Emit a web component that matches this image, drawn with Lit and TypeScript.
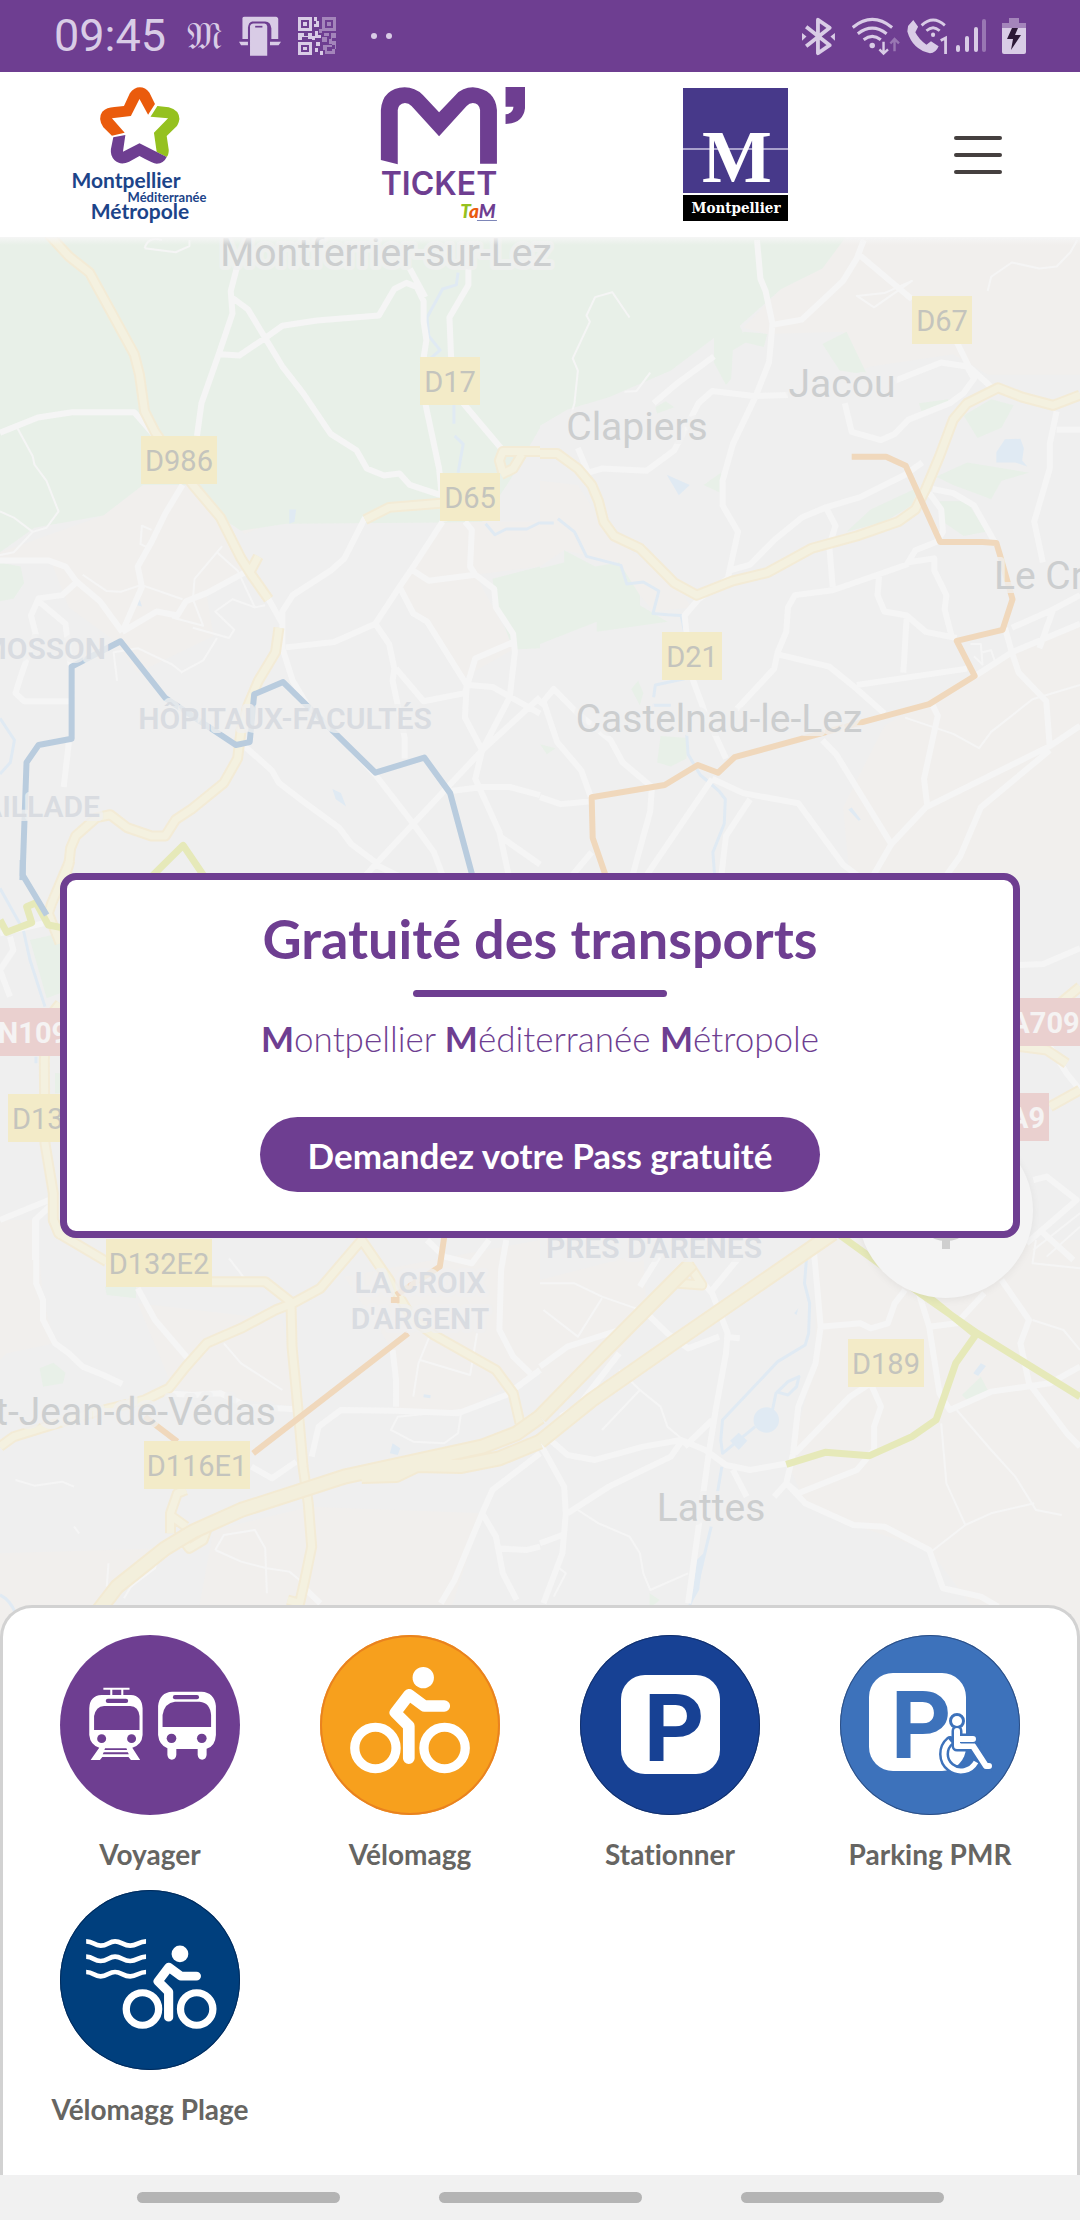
import { LitElement, html, svg, css } from "lit";
import { customElement } from "lit/decorators.js";

interface Tile {
  place: string;
  land: string;
  green: string;
  water: string;
  rivers: string;
  roads: string;
  lanes: string;
  main: string;
  motorway: string;
  blue: string;
  orange: string;
  lime: string;
}

// The map is cut in tiles; each one has its own drawing grid.
const TILES: Tile[] = [
  {
    place: "translate(0 240) scale(.3444 .4082)",
    land: "M0 765 300 675 415 600H540L640 680 720 800 600 870 620 970 400 1060 330 980 200 900 150 790 0 780zM1290 690H1568V800L1380 820 1470 960 1490 1003 1350 1070 1200 900 1160 850zM655 665 800 640V690L710 720z",
    green: "M0-10H1568V460L1480 590 1400 690 1290 692 830 695 700 712 640 680 540 600H415L300 675 100 705 0 765zM1430 830 1568 800V1000L1490 1003 1440 890zM0 790 60 800 70 840 40 878 0 885z",
    water: "M840 660 860 660 855 690 840 695zM965 1345 990 1355 1005 1388 975 1370zM405 878 412 898 398 895z",
    rivers: "M1330 80 1325 110 1285 120 1240 190 1245 235 1278 270 1250 290M1318 400V450M1320 480 1345 500 1330 570M1410 695 1437 722 1470 708 1530 708 1568 692M0 1172 42 1225 30 1280 0 1308",
    roads: "M0 472 110 435 210 422 390 422 450 480M690 60 670 125 675 180 635 280 585 400 572 480M672 140 720 170 770 240 820 310 880 375 960 475 1035 515 1065 560 1115 577 1160 572 1190 600 1280 625M640 280 695 283 770 240 820 210 920 197 1100 185 1145 120 1180 105 1210 115 1230 150 1230 200 1238 245 1228 300 1235 400 1275 560 1290 690M1190 70 1235 140M1360 70V110L1305 190 1310 290 1345 400 1460 515M530 600 480 670 440 740 400 800 412 850 355 960M355 960 455 910 515 920 540 885 600 865 710 815M0 785H140L190 800 220 835 290 885 355 960M220 840 180 870 112 878 90 920 105 970M112 885 190 940 205 1040M105 960 60 1070 45 1110 70 1130 200 1130M200 1230 185 1340M1060 680 1000 780 960 810 850 870 820 910 820 1000 850 1080 900 1150 1000 1230 1090 1310 1200 1430 1260 1500 1290 1568M780 880 820 940M830 998 970 985 1090 940 1160 850 1200 800 1285 690M1200 810 1245 835 1380 820 1435 855 1440 900 1490 965 1495 1010 1480 1120 1400 1250M1350 690 1370 710 1365 800 1380 820M1090 940 1130 990 1145 1050 1140 1080 1175 1220 1175 1270M1150 1050 1230 1130 1350 1110 1380 1025 1490 985M1160 850 1200 915 1240 935 1355 1090 1350 1170 1400 1250 1380 1320 1450 1450 1480 1568M1360 1090 1430 1095 1568 1160M1568 1120 1400 1250 1200 1430 1090 1530 1050 1568M1310 1350 1400 1340 1480 1340 1568 1360M1090 1530 1180 1568M710 1240 790 1300 810 1330 880 1375 985 1440 1020 1480 1100 1530M1450 1460 1568 1530",
    lanes: "M420 20Q430-10 470 0M420 20 510 30 550 15V0M50 460 95 530 100 550 135 590 170 665 135 705 95 715 40 765 0 772M0 665 40 680 95 715M645 750 565 830 560 880 590 945 500 925M630 765 690 810 740 900 770 895M240 820 310 860 350 862 410 845 530 880M340 1080 330 1010 400 1000 500 1040 530 1060M740 900 675 880 625 910 680 955 665 975 560 950M630 975 590 1030 525 1060M440 710 412 700 408 745 425 752",
    main: "M140-15 200 40 260 80 390 280 405 330 420 420 450 470 560 600 640 680 700 780 730 820 780 880M750 775 725 815M810 950 800 1010 750 1080 720 1140 700 1200 690 1270 650 1330 555 1395 510 1420 480 1460 440 1460 370 1440 320 1408 280 1415 220 1460 205 1490 200 1530 185 1568M1060 685 1130 655 1280 645M1460 570 1450 540 1460 518H1568M1455 575 1490 560 1515 525",
    motorway: "",
    blue: "M1375 1568 1307 1355 1232 1268 1090 1305 822 1083 738 1113 725 1230 685 1237 480 1122 350 983 208 1045V1222L112 1237 77 1280 65 1568",
    orange: "",
    lime: "M430 1568 532 1483 600 1568",
  },
  {
    place: "translate(540 240) scale(.3444 .4082)",
    land: "M880 0H1568V330H1300L1200 280 960 310 930 320 880 225 660 230 590 215 700 120 820 70zM0 590 110 600 200 720 400 850 440 900 330 910 290 870 230 790 70 760 0 800zM1568 940V1568H900L880 1390 1000 1190 1260 1060z",
    green: "M0-10H890L820 70 700 120 580 210 600 250 560 270 555 340 540 355 505 300V240L380 320 200 385 80 415 0 455zM590 225 660 230 650 262 590 250zM820 255 890 225 950 330 870 320zM0 805 70 790V760L160 800 230 790 290 870 290 895 370 935 165 960V935L0 990zM1230 430 1310 390 1375 405 1340 460 1270 485zM1150 580 1240 545 1420 570 1340 590 1310 635 1200 600zM890 715 960 660 1100 605 1080 650 1000 690zM1160 640 1240 640 1295 715 1230 725 1170 690zM475 600 525 570V620zM265 1100 285 1080 300 1110 290 1140zM350 1215 430 1220 425 1270 380 1290 340 1280zM0 1235 45 1245 20 1260zM1100 400 1185 390V405L1110 425zM335 410 365 395 390 410 340 425z",
    water: "M1325 520 1350 488 1395 487 1405 510 1400 540 1415 555 1380 545 1325 545zM368 575 435 600 403 625zM895 1395 905 1390 932 1420 925 1423z",
    rivers: "M0 693H40M52 683 100 715 135 775 235 797 252 843 300 838 345 860 328 915 370 918 410 920 420 960M330 1120 335 1090 420 1075M325 1140H380M425 1200 430 1260 465 1310 520 1350 538 1370 535 1430 502 1500 508 1568",
    roads: "M630 0 640 95 655 125 675 205 665 300 625 385 560 500 530 590 530 650 575 715 545 830 460 880 420 920 430 1000 445 1080 480 1160 540 1270M940 0 920 45 880 100 830 140 760 195 675 208M925 35 1080 145M1210 250 1245 310 1310 360M1030 345 1165 300 1240 310 1260 340 1230 375 1190 400 1070 440 1030 475 990 490 905 470 885 400M505 285 400 350 330 400M720 380 620 382 500 370 460 400 390 515 310 565 180 560 140 570 110 510M550 810 610 795 680 735 760 680 830 655 930 630 1060 575 1110 545M830 655 858 700 840 750 850 850M1500 420 1480 500 1480 560 1435 690 1460 790M1500 465H1568M1140 610 1200 620 1260 650 1320 740M1130 620 1165 660 1170 715 1150 740 1090 760 1065 795 980 820 850 858 740 870 720 900 715 960 690 1010 680 1050 570 1150M1065 790 1145 780 1145 810 1180 870 1175 905 1195 970M985 820 980 870 1000 910 1065 920 1120 960 1210 975M1065 920 1055 1060M690 1015 840 1045 920 1100 1000 1160M920 1090 1240 1050M1370 950 1490 905 1568 870M1490 905 1450 1000M1260 1070 1370 1010 1568 940M1350 950 1370 1010 1390 1060 1470 1130 1480 1240M1568 1190 1480 1240 1120 1390 1020 1480 960 1568M1480 1250 1280 1390 1220 1510 1170 1568M1140 1140 1155 1165 1115 1320 1125 1390M820 1225 860 1260 1020 1480M0 1140 40 1100 110 1160 205 1225 240 1280 325 1340 320 1400 265 1568M10 1130 50 1230 120 1300 150 1370M0 1365 60 1382 150 1375M500 1320 590 1355 750 1380 880 1530 940 1568M500 1320 300 1568M610 1370 540 1460 525 1568M150 1500 90 1560",
    lanes: "M260 190 210 128 160 140 135 185 145 200 95 290 110 320 100 400 90 430M245 372 280 370 320 325M1300 125 1310 90 1370 55 1450 70 1500 65 1540 30 1560 0M920 137 970 165 1080 100 1000 130zM1060 1170 1200 1210 1275 1245 1310 1205 1430 1125 1568 1090M1250 990H1280L1285 1040 1260 1020M1285 1010 1310 1005 1320 1030",
    main: "M0 523H50L110 560 150 600 170 640 185 690 215 725 290 755 390 840 455 870 560 835 660 815 790 755 920 725 1040 690 1090 660 1120 610 1160 530 1200 440 1240 400 1330 362 1400 385 1490 405 1568 380",
    motorway: "",
    blue: "",
    orange: "M905 531H1005L1062 553 1162 740H1285L1325 742 1335 770 1372 880 1343 955 1210 982 1262 1068 1130 1137 920 1185 565 1267 517 1305 458 1286 362 1335 150 1365 153 1465 195 1568",
    lime: "",
  },
  {
    place: "translate(0 860) scale(.3333)",
    land: "",
    green: "M90 240 180 220V400L140 415zM165 640H180V700H165z",
    water: "",
    rivers: "M0 85 70 210 90 300 135 440M108 590V610",
    roads: "M0 220 130 190M30 230 40 270 0 330 30 410M0 1080 160 1015M105 1200V1080L160 1030",
    lanes: "",
    main: "M210 0 155 130 145 160 180 250M180 430 140 480 133 600 135 850 160 1000 160 1080 185 1130",
    motorway: "",
    blue: "M68 0V45L140 165",
    orange: "",
    lime: "M0 180 20 217 95 188 80 140 108 128 145 195 185 203",
  },
  {
    place: "translate(960 860) scale(.3333)",
    land: "",
    green: "",
    water: "",
    rivers: "",
    roads: "M180 315 250 312 360 265M270 560 320 640 360 690M220 960 260 950 350 1020 200 1150M240 1110 340 1200",
    lanes: "M220 1170 360 1060M260 1190 360 1100",
    main: "M300 430 360 380M180 560 260 570 320 610M270 740 360 690",
    motorway: "",
    blue: "",
    orange: "",
    lime: "",
  },
  {
    place: "translate(0 1220) scale(.3444 .3333)",
    land: "M0 0H105L125 240 160 370 20 400 0 420zM400 250 820 300 860 560 560 520 500 500zM1000 170 1568 60V450L1330 580H1150L1140 390zM0 1000 480 985 340 1100 290 1260H0zM620 930 900 860 1400 880 1280 1260H560z",
    green: "M305 200H395V235L310 225zM115 445 155 428 190 458 183 490 125 500z",
    water: "M1140 670 1162 685 1155 705 1132 700z",
    rivers: "M0 1125Q30 1140 45 1180M1230 527 1250 530",
    roads: "M105 0V190L125 240V300L160 370 200 400 240 440 300 465 355 492M400 205 450 300 545 415M480 520 560 525 640 520 720 560 860 568M905 710 925 620 990 570 1150 572 1330 580 1470 525 1568 450M1140 390 1150 480V560M1568 700 1430 810 1400 880 1320 1080 1280 1150M1400 880 1440 950 1460 1060 1500 1140M1440 985 1530 990 1568 980M730 740 790 775 860 725M1240 60 1290 110 1370 130 1420 60M1470 60 1455 150 1450 330 1490 410 1540 460M885 1105 930 1150",
    lanes: "M665 115 710 175M650 370 700 430 820 510M45 780 100 797 180 785 215 800M625 990 650 945 740 930 770 985 775 1120M625 990 700 1025 775 1045 840 1055 870 1080M1220 420 1365 465 1385 340M1255 330 1215 430 1200 530M1135 630 1155 590 1340 570 1330 640 1290 670 1200 665zM315 1030 310 1100M360 1135 380 1100 450 1045 460 1010 540 975M215 920 230 940",
    main: "M155 0 170 40 310 125M615 185H770L850 250M0 680 40 650 150 615 300 570 420 540 490 505 540 440 600 370 700 325 800 270 850 250 930 205 1050 60 1130 180 1200 300 1260 345 1440 450 1490 520 1510 610M845 255 848 380 870 620 880 740 895 850 905 980 885 1080 870 1150 835 1140M540 810 515 820 495 880V940M500 890 540 920M600 930 590 960 550 985 535 965",
    motorway: "M280 1180 340 1100 480 985 560 935 700 870 1000 770 1200 725 1400 680 1500 640 1568 590M1050 768 1150 765 1210 735 1340 738 1450 715 1568 665",
    blue: "",
    orange: "M1290 50 1277 140 1150 225M1135 240H1160M1185 340 735 700M515 665 420 590",
    lime: "",
  },
  {
    place: "translate(540 1220) scale(.3444 .3333)",
    land: "M800 60H1568V1260H1330L1130 990 910 915 770 850 720 730 800 430zM0 180 300 100 310 280 230 400 0 600zM1280 270 1300 250 1400 300 1380 360 1300 330z",
    green: "M1225 525 1280 470 1300 510 1240 540zM318 1120 348 1140 330 1155 318 1155z",
    water: "M620 600A37 38 0 0 0 694 600 37 38 0 0 0 620 600zM577 638 602 662 577 690 552 662zM455 1020 475 1000 462 1110 440 1150zM1258 460 1280 430 1295 438 1272 468zM738 280 750 265 745 285z",
    rivers: "M775 100 768 190 783 250 780 340 770 375 690 425 530 600 525 660 530 700 625 620M675 570 685 520 720 485 752 470 745 500 720 525 685 515M528 740 515 820M497 920 460 1080 435 1155",
    roads: "M795 90 815 320 800 430 750 560 735 700 715 790M440 150 500 220 545 340 540 400 510 570 490 700 470 850 430 1150M30 660 80 705 160 720 300 680 410 660 480 690 540 735 610 750 720 730M0 670 70 800 75 880 65 1000 10 1150M80 880 200 800 380 710 410 665M0 970 65 945M740 700 900 530 960 490 990 560 970 620V690L920 750 750 820 715 790 680 830M715 790 770 850 910 915 1000 920 1130 990 1170 1105 1280 1130 1330 1160M560 750 600 830M500 600 420 680M1100 220 1130 320 1160 520 1190 570 1310 515 1480 490 1568 440M1130 320 1210 310 1290 220M1340 180 1420 300 1395 370 1420 490 1530 640 1568 680M815 320 930 310 960 325 1010 310 1030 250 1060 210M310 280 370 340 430 385 520 350M0 440 80 380 230 330M60 590 110 560 230 400M290 200 350 100M500 210 580 110M535 350 580 355",
    lanes: "M0 190H100L180 230 320 280M180 235 110 350 10 270M230 450 290 510 350 560 370 620 410 655M290 510 180 630M110 870 170 910 260 950 290 1000 300 1060 320 1110 430 1060M1165 610 1180 790 1235 915 1130 1000M1235 915 1310 880 1435 850M1210 570 1310 690 1380 770 1440 870 1515 885M1440 60 1430 130 1568 145M1430 300 1520 330 1568 390M50 1040 75 1060 40 1130",
    main: "M400 190 470 195 430 130",
    motorway: "M0 590 180 400 440 130M0 665 150 540 400 360 850 40",
    blue: "",
    orange: "",
    lime: "M870 45 960 112 1110 225 1270 340 1568 530M1130 232 1265 345 1207 430 1150 600 1080 650 957 707 828 697 715 733",
  },
];

// kind: t = town, q = district
const PLACES: [string, string, number, number, string][] = [
  ["t", "Montferrier-sur-Lez", 386, 266, "middle"],
  ["t", "Clapiers", 637, 440, "middle"],
  ["t", "Jacou", 842, 397, "middle"],
  ["t", "Castelnau-le-Lez", 719, 732, "middle"],
  ["t", "Le Crès", 994, 589, "start"],
  ["t", "St-Jean-de-Védas", 276, 1425, "end"],
  ["t", "Lattes", 711, 1521, "middle"],
  ["q", "MOSSON", 106, 659, "end"],
  ["q", "HÔPITAUX-FACULTÉS", 285, 729, "middle"],
  ["q", "PAILLADE", 100, 817, "end"],
  ["q", "LA CROIX", 420, 1293, "middle"],
  ["q", "D'ARGENT", 420, 1329, "middle"],
  ["q", "PRÉS D'ARÈNES", 654, 1258, "middle"],
];

const SHIELDS: [string, number, number, number, string][] = [
  ["D67", 912, 296, 60, "d"],
  ["D17", 420, 357, 60, "d"],
  ["D986", 141, 436, 76, "d"],
  ["D65", 440, 473, 60, "d"],
  ["D21", 662, 632, 60, "d"],
  ["N109", -6, 1008, 78, "n"],
  ["D132", 8, 1094, 76, "d"],
  ["A709", 1007, 998, 76, "n"],
  ["A9", 1005, 1093, 44, "n"],
  ["D132E2", 106, 1239, 106, "d"],
  ["D116E1", 144, 1441, 106, "d"],
  ["D189", 848, 1339, 76, "d"],
];

const layer = (cls: string, key: keyof Tile) =>
  TILES.filter((t) => t[key]).map((t) => svg`<path class=${cls} transform=${t.place} d=${t[key]} />`);

@customElement("city-map")
export class CityMap extends LitElement {
  static styles = css`
    :host { display: block; overflow: hidden; background: #efefef; }
    svg { display: block; width: 100%; height: 100%; }
    path { vector-effect: non-scaling-stroke; }
    .land { fill: #f1efed; }
    .green { fill: #e8f0e8; }
    .water { fill: #e0eaf3; }
    .river, .road, .lane, .edge, .fill, .wide-edge, .wide, .tram { fill: none; stroke-linejoin: round; }
    .river { stroke: #e0eaf3; stroke-width: 3; }
    .road { stroke: #f5f5f5; stroke-width: 6; }
    .lane { stroke: #f5f5f5; stroke-width: 2; }
    .edge { stroke: #f3ebd6; stroke-width: 11; }
    .fill { stroke: #f4f1e0; stroke-width: 7; }
    .wide-edge { stroke: #f3ead3; stroke-width: 16; }
    .wide { stroke: #f3efdc; stroke-width: 12; }
    .tram { stroke-width: 6; }
    .blue { stroke: #b9ccde; }
    .orange { stroke: #f0d8bc; }
    .lime { stroke: #e6e9b9; stroke-width: 7; }
    text { font-family: Roboto, sans-serif; }
    .t, .q { paint-order: stroke; stroke: rgba(240, 240, 240, 0.75); stroke-width: 8; stroke-linejoin: round; }
    .t { font-size: 39px; fill: #cccecf; }
    .q { font-size: 30px; font-weight: 600; fill: #d9dce1; }
    .shield-d { fill: #f3ebc8; }
    .shield-n { fill: #ead0cf; }
    .num-d, .num-n { font-size: 29px; text-anchor: middle; }
    .num-d { fill: #c4c4bd; }
    .num-n { fill: #f5f3f3; font-weight: 700; }
  `;

  render() {
    return html`
      <svg viewBox="0 237 1080 1403" preserveAspectRatio="xMidYMin slice" role="img" aria-label="Montpellier">
        ${layer("land", "land")} ${layer("green", "green")} ${layer("water", "water")}
        ${layer("river", "rivers")} ${layer("lane", "lanes")} ${layer("road", "roads")}
        ${layer("edge", "main")} ${layer("fill", "main")}
        ${layer("wide-edge", "motorway")} ${layer("wide", "motorway")}
        ${layer("tram lime", "lime")} ${layer("tram orange", "orange")} ${layer("tram blue", "blue")}
        ${PLACES.map(([kind, name, x, y, anchor]) =>
          svg`<text class=${kind} x=${x} y=${y} text-anchor=${anchor}>${name}</text>`)}
        ${SHIELDS.map(([name, x, y, w, kind]) => svg`
          <rect class="shield-${kind}" x=${x} y=${y} width=${w} height="48" />
          <text class="num-${kind}" x=${x + w / 2} y=${y + 35}>${name}</text>`)}
      </svg>`;
  }
}

const cyclist = svg`
  <ellipse cx="1229" cy="233" rx="31" ry="32" fill="#fff" />
  <g fill="none" stroke="#fff">
    <ellipse cx="1090" cy="444" rx="60" ry="62" stroke-width="27" />
    <ellipse cx="1291" cy="444" rx="60" ry="62" stroke-width="27" />
    <path d="M1290 318H1232L1188 284 1148 338 1187 378V475" stroke-width="34" stroke-linecap="round" stroke-linejoin="round" />
  </g>`;

const SERVICES = [
  {
    label: "Voyager", tone: "violet",
    art: svg`<svg viewBox="174 105 523 540" preserveAspectRatio="none">
      <g fill="#fff">
        <path d="M300 263H376V269H358V286H352V269H326V286H320V269H300z" />
        <path d="M259 325Q260 287 295 285H380Q412 287 414 325V405Q412 435 384 443L407 480H380L373 471H297L290 480H263L288 443Q262 435 259 405z" />
        <path d="M459 318Q463 277 500 275H585Q623 277 627 318V405Q625 440 600 446V465Q598 479 587 479T574 465V447H512V465Q510 479 499 479T486 465V445Q462 435 459 405z" />
      </g>
      <g fill="#6e3e91">
        <rect x="307" y="296" width="65" height="13" rx="6" />
        <path d="M273 390V348Q278 320 302 318H378Q402 320 405 348V390z" />
        <circle cx="295" cy="416" r="13" /><circle cx="382" cy="416" r="13" />
        <path d="M305 445H367L369 450H303zM301 457H371L374 463H298z" />
        <rect x="502" y="285" width="76" height="13" rx="6" />
        <path d="M472 381V345Q478 308 508 305H580Q610 308 613 345V381z" />
        <circle cx="498" cy="415" r="14" /><circle cx="586" cy="415" r="14" />
      </g></svg>`,
  },
  {
    label: "Vélomagg", tone: "amber",
    art: svg`<svg viewBox="929 105 523 540" preserveAspectRatio="none">${cyclist}</svg>`,
  },
  {
    label: "Stationner", tone: "navy",
    art: svg`<svg viewBox="0 0 180 180">
      <rect x="41" y="40" width="99" height="99" rx="24" fill="#fff" />
      <text class="park" x="94" y="126" fill="#174194">P</text></svg>`,
  },
  {
    label: "Parking PMR", tone: "sky",
    art: svg`<svg viewBox="0 0 180 180">
      <rect x="29" y="38" width="97" height="98" rx="24" fill="#fff" />
      <text class="park" x="81" y="123" fill="#3d72bb">P</text>
      <g fill="none" stroke-linecap="round" stroke-linejoin="round">
        <g stroke="#3d72bb">
          <circle cx="117" cy="86" r="6" fill="#3d72bb" stroke-width="4" />
          <path d="M110 106A17 17 0 1 0 136 127" stroke-width="10" />
          <path d="M117 96V111H133L147 131H149M119 104H134" stroke-width="11" />
        </g>
        <circle cx="117" cy="86" r="5" fill="#fff" />
        <g stroke="#fff">
          <path d="M110 106A17 17 0 1 0 136 127" stroke-width="5" stroke-linecap="butt" />
          <path d="M117 96V111H133L146 131H149M117 104H133" stroke-width="6" />
        </g>
        <path d="M121 108H134" stroke="#3d72bb" stroke-width="1" />
      </g></svg>`,
  },
  {
    label: "Vélomagg Plage", tone: "deep",
    art: svg`<svg viewBox="174 60 523 540" preserveAspectRatio="none">
      <g fill="none" stroke="#fff" stroke-width="14">
        <path d="M250 214C272 214 272 227 292 227S316 214 334 214 358 227 378 227 402 214 424 214" />
        <path d="M250 260C272 260 272 273 292 273S316 260 334 260 358 273 378 273 402 260 424 260" />
        <path d="M250 306C272 306 272 319 292 319S316 306 334 306 358 319 378 319 402 306 424 306" />
      </g>
      <g transform="translate(-441 69) scale(.784)">${cyclist}</g></svg>`,
  },
];

@customElement("app-root")
export class AppRoot extends LitElement {
  static styles = css`
    :host {
      display: flex; flex-direction: column; min-height: 100vh; background: #fff;
      font-family: Lato, "Open Sans", sans-serif; color: #666562;
    }
    svg { display: block; }
    button { font: inherit; color: inherit; border: 0; padding: 0; background: none; cursor: pointer; }
    .status {
      display: flex; justify-content: space-between; align-items: center; height: 72px; padding: 0 54px;
      background: #6e3e91; color: #d9cce6; box-sizing: border-box;
    }
    .status-side { display: flex; align-items: center; }
    .status-side.left { gap: 17px; }
    .status-side.right { gap: 7px; }
    .clock { font: 400 45px/56px Roboto, sans-serif; }
    .fraktur { font: 400 38px/56px "DejaVu Sans", "DejaVu Serif", serif; margin-left: 4px; }
    .dots { display: flex; gap: 9px; margin-left: 18px; }
    .dot { width: 6px; height: 6px; border-radius: 50%; background: currentColor; }
    .header {
      display: grid; grid-template-columns: 139fr 174fr 109fr 118fr; justify-items: center; align-items: center;
      height: 165px; background: #fff;
    }
    .brand { color: #1c4489; font-weight: 700; }
    .menu { display: flex; flex-direction: column; gap: 13px; margin-left: 32px; }
    .bar { width: 48px; height: 4px; border-radius: 2px; background: #45403f; }
    .main { flex: 1; display: flex; flex-direction: column; }
    .area { position: relative; flex: 1; display: flex; align-items: flex-end; padding: 0 60px 402px; }
    .area::after {
      content: ""; position: absolute; inset: 0 0 auto; height: 8px;
      background: linear-gradient(rgba(246, 246, 246, 0.9), rgba(255, 255, 255, 0));
    }
    .map { position: absolute; inset: 0; }
    .locate {
      position: absolute; right: 47px; bottom: 342px; width: 175px; height: 175px; border-radius: 50%;
      background: #f4f4f4; box-shadow: 0 2px 9px rgba(0, 0, 0, 0.06); display: grid; place-items: center;
    }
    .card {
      position: relative; flex: 1; display: flex; flex-direction: column; align-items: center;
      padding: 27px 20px 39px; border: 7px solid #6e3e91; border-radius: 16px; background: #fff; color: #6e3e91;
    }
    .title { margin: 0; font-size: 54px; line-height: 64px; font-weight: 700; }
    .rule { width: 254px; height: 7px; border-radius: 4px; background: #6e3e91; margin: 19px 0; }
    .subtitle { margin: 0 0 57px; font-size: 35px; line-height: 44px; font-weight: 300; }
    .initial { font-weight: 700; }
    .pass {
      height: 75px; padding: 0 48px; border-radius: 38px; background: #6e3e91; color: #fff;
      font-size: 35px; font-weight: 700;
    }
    .sheet {
      position: relative; margin-top: -35px; padding: 27px 17px 46px; border: 3px solid #d2d2d2; border-bottom: 0;
      border-radius: 32px 32px 0 0; background: #fff;
    }
    .services { display: grid; grid-template-columns: repeat(4, 1fr); row-gap: 16px; margin: 0; padding: 0; list-style: none; }
    .service { display: flex; flex-direction: column; align-items: center; gap: 19px; width: 100%; }
    .disc { width: 180px; height: 180px; border-radius: 50%; overflow: hidden; }
    .disc svg { width: 180px; height: 180px; }
    .violet { background: #6e3e91; }
    .amber { background: #f7a01d; box-shadow: inset 0 0 0 2px #e9821f; }
    .navy { background: #174194; box-shadow: inset 0 0 0 1px #12306c; }
    .sky { background: #3d72bb; box-shadow: inset 0 0 0 1px #2c4f85; }
    .deep { background: #003f7d; box-shadow: inset 0 0 0 1px #002b5c; }
    .park { font: 700 94px Roboto, sans-serif; text-anchor: middle; }
    .label { font-size: 28px; line-height: 40px; font-weight: 700; font-variant-ligatures: none; white-space: nowrap; }
    .keys { display: flex; justify-content: center; align-items: center; gap: 99px; height: 45px; background: #f1f1f1; }
    .key { width: 203px; height: 11px; border-radius: 6px; background: #b4b4b4; }
  `;

  private statusBar() {
    return html`
      <div class="status">
        <div class="status-side left">
          <span class="clock">09:45</span>
          <span class="fraktur">𝔐</span>
          <svg width="42" height="40" viewBox="700 54 122 118" preserveAspectRatio="none" fill="currentColor">
            <path d="M710 60Q711 56 716 56H808Q813 57 814 62V122H794V90Q792 71 776 70H738Q728 72 726 88V122H710z" />
            <path d="M732 84Q734 76 742 76H774Q781 77 782 84V171H732zM700 130H726V140H706zM790 130H822L815 140H790z" />
            <rect x="747" y="83" width="21" height="5" fill="#6e3e91" />
          </svg>
          <svg width="38" height="38" viewBox="0 0 38 38" fill="currentColor">
            <path fill-rule="evenodd" d="M0 0H14V14H0zM3 3V11H11V3zM5 5H9V9H5zM0 25H14V38H0zM3 28V35H11V28zM5 30H9V33H5zM16 0H19V4H16zM18 4H21V10H16V7H18zM0 16H6V19H10V16H14V22H10V20H4V23H0zM17 14H20V18H23V21H17zM14 19H17V23H14zM18 25H22V29H18zM17 31H20V35H17zM22 34H25V38H22z" />
            <path fill-rule="evenodd" opacity=".5" d="M24 0H38V14H24zM27 3V11H35V3zM29 5H33V9H29zM21 12H24V16H21zM26 16H31V19H26zM33 16H38V21H34V24H38V32H34V27H31V22H33zM24 20H29V25H24zM25 28H37V37H27V33H25zM29 30V34H34V30z" />
          </svg>
          <span class="dots"><span class="dot"></span><span class="dot"></span></span>
        </div>
        <div class="status-side right">
          <svg width="43" height="39" viewBox="762 52 124 112" preserveAspectRatio="none" fill="none" stroke="currentColor" stroke-width="11">
            <path d="M774 80 842 133 808 156V60L842 83 774 136" stroke-linejoin="round" />
            <path d="M762 98 775 108 762 120zM857 98 844 108 857 120z" fill="currentColor" stroke="none" />
          </svg>
          <svg width="48" height="39" viewBox="903 52 140 112" preserveAspectRatio="none" fill="none" stroke="currentColor" stroke-width="9">
            <path d="M905 82Q962 36 1020 82M920 100Q962 68 1004 100M937 117Q962 98 987 117" />
            <circle cx="962" cy="134" r="8" fill="currentColor" stroke="none" />
            <path d="M995 123V155M983 145 995 157 1008 145" stroke-width="7" />
            <path d="M1027 150V118M1015 128 1027 115 1040 128" stroke-width="7" opacity=".4" />
          </svg>
          <svg width="41" height="38" viewBox="1059 55 118 105" preserveAspectRatio="none">
            <path fill="currentColor" d="M1062 80 1077 63 1091 82 1083 97Q1092 115 1115 132L1128 122 1150 136Q1142 155 1125 155 1075 145 1060 95z" />
            <path d="M1101 78Q1134 48 1168 78M1115 93Q1134 76 1153 93" fill="none" stroke="currentColor" stroke-width="8" />
            <circle cx="1134" cy="104" r="6" fill="currentColor" />
            <path d="M1156 120 1170 113V157" fill="none" stroke="currentColor" stroke-width="8" />
          </svg>
          <svg width="40" height="36" viewBox="0 0 40 36" stroke="currentColor" stroke-width="4" stroke-linecap="round">
            <path d="M3 29V32M12 20V32M21 11V32" /><path d="M29 3V32" opacity=".4" />
          </svg>
          <svg width="24" height="36" viewBox="0 0 24 36" fill="currentColor">
            <path opacity=".5" d="M7 0H17V5H24V10H0V5H7z" /><path d="M0 10H24V34Q24 36 22 36H2Q0 36 0 34z" />
            <path d="M10 10H16L13 17H19L9 32 11 21H5z" fill="#2c1836" />
          </svg>
        </div>
      </div>`;
  }

  private header() {
    return html`
      <header class="header">
        <svg class="brand" width="142" height="144" viewBox="68 83 142 144" fill="#1c4489" text-anchor="middle">
          <g transform="scale(.3444 .3333)">
            <path fill="#ea5b0c" d="M325 407 300 382Q283 355 297 335 310 322 332 321L360 318 377 280Q390 262 406 262T434 278L450 312 430 344 405 297 380 348 325 355 362 398z" />
            <path fill="#95c11f" d="M457 318 490 322Q520 330 521 357 518 375 510 382L484 408 490 450Q490 465 484 471L455 456 447 398 488 355 437 350z" />
            <path fill="#6e3e91" d="M329 412 364 405 357 455 405 430 484 471Q476 490 455 491 445 491 405 468L375 485Q350 498 332 480 320 467 322 448z" />
          </g>
          <text x="126" y="188" font-size="21">Montpellier</text>
          <text x="167" y="202" font-size="13">Méditerranée</text>
          <text x="140" y="219" font-size="21">Métropole</text>
        </svg>
        <svg width="146" height="144" viewBox="378 83 146 144">
          <g transform="scale(.3444 .3333)" fill="#6e3e91">
            <path d="M1103 480V330Q1108 265 1172 262 1202 262 1225 285L1272 337 1320 285Q1340 262 1370 262 1435 268 1440 330V491H1391V330Q1388 309 1370 309 1360 309 1352 318L1272 409 1192 318Q1184 309 1173 309 1153 312 1152 330V493z" />
            <path d="M1465 261H1522V318Q1520 370 1465 372V343Q1487 340 1488 320H1465z" />
            <path d="M1382 660H1440V663H1382z" fill="#7d86b8" />
          </g>
          <text x="438" y="195" font-family="Inter" font-weight="600" font-size="32" text-anchor="middle" fill="#6e3e91">TICKET</text>
          <text x="477" y="218" font-size="19" font-weight="900" font-style="italic" text-anchor="middle"><tspan fill="#95c11f">T</tspan><tspan fill="#ea5b0c">a</tspan><tspan fill="#6e3e91">M</tspan></text>
        </svg>
        <svg width="105" height="144" viewBox="683 83 105 144" text-anchor="middle" fill="#fff">
          <path fill="#47398a" d="M683 88H788V193H683z" /><path fill="#000" d="M683 195H788V221H683z" />
          <path fill="#a9a1cc" d="M683 148H788V150H683z" />
          <text x="737" y="182" font-family="Liberation Serif" font-weight="700" font-size="74">M</text>
          <text x="736" y="213" font-family="DejaVu Serif Condensed, DejaVu Serif" font-weight="700" font-size="15">Montpellier</text>
        </svg>
        <button class="menu" aria-label="Menu"><span class="bar"></span><span class="bar"></span><span class="bar"></span></button>
      </header>`;
  }

  render() {
    return html`
      ${this.statusBar()} ${this.header()}
      <main class="main">
        <section class="area">
          <city-map class="map"></city-map>
          <button class="locate" aria-label="Ma position">
            <svg width="76" height="76" viewBox="0 0 76 76" fill="none" stroke="#cfcfcf" stroke-width="8">
              <circle cx="38" cy="38" r="26" /><path d="M38 0V12M38 64V76M0 38H12M64 38H76" />
              <circle cx="38" cy="38" r="12" fill="#cfcfcf" stroke="none" />
            </svg>
          </button>
          <div class="card">
            <h1 class="title">Gratuité des transports</h1>
            <div class="rule"></div>
            <p class="subtitle"><span class="initial">M</span>ontpellier <span class="initial">M</span>éditerranée <span class="initial">M</span>étropole</p>
            <button class="pass">Demandez votre Pass gratuité</button>
          </div>
        </section>
        <nav class="sheet">
          <ul class="services">
            ${SERVICES.map((s) => html`
              <li><button class="service">
                <span class="disc ${s.tone}">${s.art}</span>
                <span class="label">${s.label}</span>
              </button></li>`)}
          </ul>
        </nav>
      </main>
      <div class="keys"><span class="key"></span><span class="key"></span><span class="key"></span></div>`;
  }
}
